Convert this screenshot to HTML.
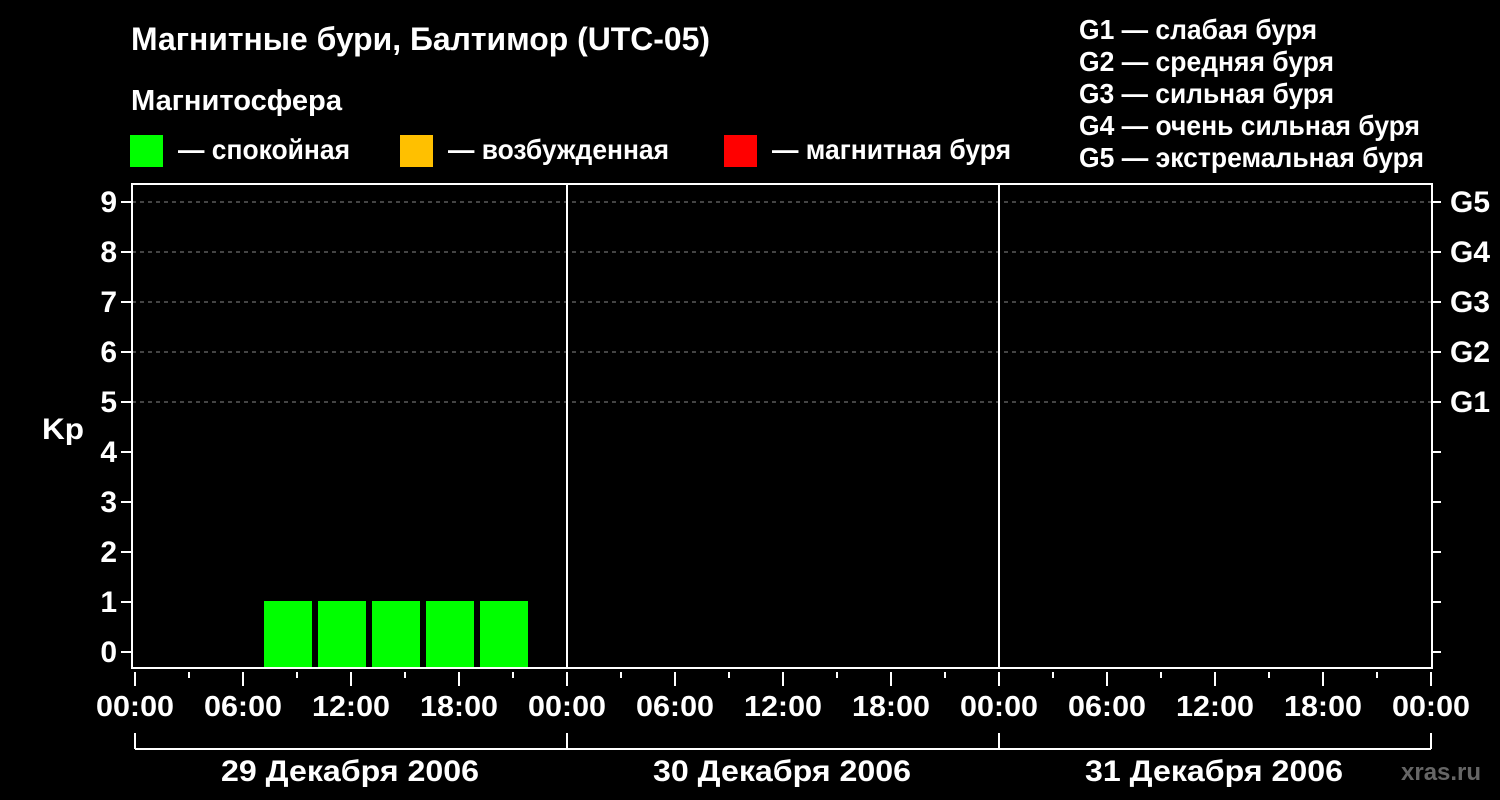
<!DOCTYPE html>
<html><head><meta charset="utf-8"><style>
html,body{margin:0;padding:0;background:#000;width:1500px;height:800px;overflow:hidden}
text{font-family:"Liberation Sans",sans-serif;font-weight:bold;fill:#fff}
</style></head><body>
<svg width="1500" height="800" xmlns="http://www.w3.org/2000/svg">
<text x="131" y="50" font-size="32" textLength="579" lengthAdjust="spacingAndGlyphs">Магнитные бури, Балтимор (UTC-05)</text>
<text x="131" y="110" font-size="29" textLength="211" lengthAdjust="spacingAndGlyphs">Магнитосфера</text>
<rect x="130" y="135" width="33" height="32" fill="#00ff00"/>
<text x="178" y="159" font-size="28" textLength="172" lengthAdjust="spacingAndGlyphs">— спокойная</text>
<rect x="400" y="135" width="33" height="32" fill="#ffc000"/>
<text x="448" y="159" font-size="28" textLength="221" lengthAdjust="spacingAndGlyphs">— возбужденная</text>
<rect x="724" y="135" width="33" height="32" fill="#ff0000"/>
<text x="772" y="159" font-size="28" textLength="239" lengthAdjust="spacingAndGlyphs">— магнитная буря</text>
<g font-size="28">
<text x="1079" y="39" textLength="238" lengthAdjust="spacingAndGlyphs">G1 — слабая буря</text>
<text x="1079" y="71" textLength="255" lengthAdjust="spacingAndGlyphs">G2 — средняя буря</text>
<text x="1079" y="103" textLength="255" lengthAdjust="spacingAndGlyphs">G3 — сильная буря</text>
<text x="1079" y="135" textLength="341" lengthAdjust="spacingAndGlyphs">G4 — очень сильная буря</text>
<text x="1079" y="167" textLength="345" lengthAdjust="spacingAndGlyphs">G5 — экстремальная буря</text>
</g>
<g stroke="#888" stroke-dasharray="4,4" stroke-width="1">
<line x1="132" y1="202" x2="1432" y2="202"/>
<line x1="132" y1="252" x2="1432" y2="252"/>
<line x1="132" y1="302" x2="1432" y2="302"/>
<line x1="132" y1="352" x2="1432" y2="352"/>
<line x1="132" y1="402" x2="1432" y2="402"/>
</g>
<g fill="#00ff00">
<rect x="264" y="601" width="48" height="66"/>
<rect x="318" y="601" width="48" height="66"/>
<rect x="372" y="601" width="48" height="66"/>
<rect x="426" y="601" width="48" height="66"/>
<rect x="480" y="601" width="48" height="66"/>
</g>
<g stroke="#fff" stroke-width="2" fill="none">
<rect x="132" y="184" width="1300" height="484"/>
<line x1="567" y1="184" x2="567" y2="668"/>
<line x1="999" y1="184" x2="999" y2="668"/>
<path d="M121 202h11M121 252h11M121 302h11M121 352h11M121 402h11M121 452h11M121 502h11M121 552h11M121 602h11M121 652h11"/>
<path d="M1432 202h9M1432 252h9M1432 302h9M1432 352h9M1432 402h9M1432 452h9M1432 502h9M1432 552h9M1432 602h9M1432 652h9"/>
<path d="M135 672v14M189 672v6M243 672v14M297 672v6M351 672v14M405 672v6M459 672v14M513 672v6M567 672v14M621 672v6M675 672v14M729 672v6M783 672v14M837 672v6M891 672v14M945 672v6M999 672v14M1053 672v6M1107 672v14M1161 672v6M1215 672v14M1269 672v6M1323 672v14M1377 672v6M1431 672v14"/>
<path d="M135 733v16M567 733v16M999 733v16M1431 733v16M135 749h1296"/>
</g>
<g font-size="30" text-anchor="end">
<text x="117" y="212">9</text><text x="117" y="262">8</text><text x="117" y="312">7</text><text x="117" y="362">6</text><text x="117" y="412">5</text><text x="117" y="462">4</text><text x="117" y="512">3</text><text x="117" y="562">2</text><text x="117" y="612">1</text><text x="117" y="662">0</text>
</g>
<text x="42" y="439" font-size="30" textLength="42" lengthAdjust="spacingAndGlyphs">Kp</text>
<g font-size="30">
<text x="1450" y="212" textLength="40" lengthAdjust="spacingAndGlyphs">G5</text><text x="1450" y="262" textLength="40" lengthAdjust="spacingAndGlyphs">G4</text><text x="1450" y="312" textLength="40" lengthAdjust="spacingAndGlyphs">G3</text><text x="1450" y="362" textLength="40" lengthAdjust="spacingAndGlyphs">G2</text><text x="1450" y="412" textLength="40" lengthAdjust="spacingAndGlyphs">G1</text>
</g>
<g font-size="29">
<text x="96" y="716" textLength="78" lengthAdjust="spacingAndGlyphs">00:00</text><text x="204" y="716" textLength="78" lengthAdjust="spacingAndGlyphs">06:00</text><text x="312" y="716" textLength="78" lengthAdjust="spacingAndGlyphs">12:00</text><text x="420" y="716" textLength="78" lengthAdjust="spacingAndGlyphs">18:00</text>
<text x="528" y="716" textLength="78" lengthAdjust="spacingAndGlyphs">00:00</text><text x="636" y="716" textLength="78" lengthAdjust="spacingAndGlyphs">06:00</text><text x="744" y="716" textLength="78" lengthAdjust="spacingAndGlyphs">12:00</text><text x="852" y="716" textLength="78" lengthAdjust="spacingAndGlyphs">18:00</text>
<text x="960" y="716" textLength="78" lengthAdjust="spacingAndGlyphs">00:00</text><text x="1068" y="716" textLength="78" lengthAdjust="spacingAndGlyphs">06:00</text><text x="1176" y="716" textLength="78" lengthAdjust="spacingAndGlyphs">12:00</text><text x="1284" y="716" textLength="78" lengthAdjust="spacingAndGlyphs">18:00</text>
<text x="1392" y="716" textLength="78" lengthAdjust="spacingAndGlyphs">00:00</text>
</g>
<g font-size="30">
<text x="221" y="781" textLength="258" lengthAdjust="spacingAndGlyphs">29 Декабря 2006</text>
<text x="653" y="781" textLength="258" lengthAdjust="spacingAndGlyphs">30 Декабря 2006</text>
<text x="1085" y="781" textLength="258" lengthAdjust="spacingAndGlyphs">31 Декабря 2006</text>
</g>
<text x="1401" y="780" font-size="24" style="fill:#666">xras.ru</text>
</svg>
</body></html>
